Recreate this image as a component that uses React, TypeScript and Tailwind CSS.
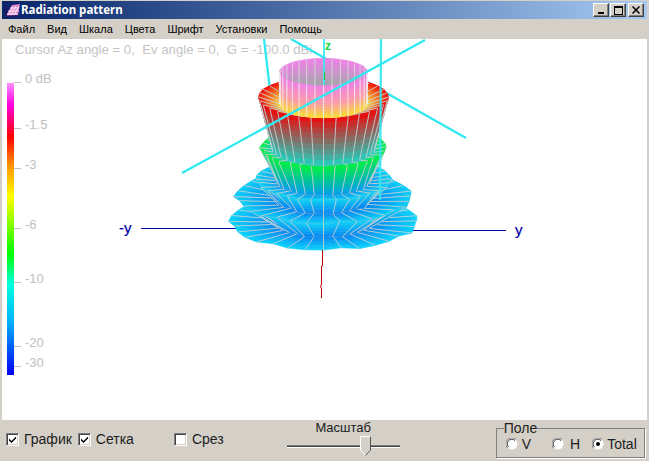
import React from "react";

type P = { r: number; cy: number; c: string; w?: number };
type Band = { a: P; b: P; side?: "back" | "front"; spoke?: string; ring?: boolean };

const CX = 323.5;
const K = 0.31;
const N = 32;
const SUB = 9;

const hex = (c: string) => [1, 3, 5].map((i) => parseInt(c.slice(i, i + 2), 16));
const mix = (a: string, b: string, t: number) => {
  const x = hex(a);
  const y = hex(b);
  return `rgb(${x.map((v, i) => Math.round(v + (y[i] - v) * t)).join(",")})`;
};

const pt = (p: P, i: number) => {
  const th = (i * 2 * Math.PI) / N;
  const wob = p.w ?? 0;
  const j = Math.sin(i * 1.7 + p.r) * 0.6 + Math.sin(i * 3.1 + p.cy) * 0.4;
  const r = p.r * (1 + wob * j);
  return [CX + r * Math.cos(th), p.cy + K * r * Math.sin(th) + wob * 20 * j];
};

const lerp = (a: number[], b: number[], t: number) => [a[0] + (b[0] - a[0]) * t, a[1] + (b[1] - a[1]) * t];

const a0: P = { r: 93, cy: 221, c: "#08d4fc", w: 0.035 };
const a1: P = { r: 48, cy: 222, c: "#0484f0", w: 0.03 };
const b1: P = { r: 87, cy: 196, c: "#0cd0f8", w: 0.04 };
const b2: P = { r: 47, cy: 199, c: "#0484f0", w: 0.05 };
const c1: P = { r: 67, cy: 179, c: "#14d4f4", w: 0.035 };
const c2: P = { r: 47, cy: 181, c: "#049cf0", w: 0.02 };
const e1: P = { r: 62, cy: 147, c: "#00f040", w: 0.035 };
const e2: P = { r: 51, cy: 149, c: "#20d0c0", w: 0.012 };
const g1: P = { r: 65, cy: 97, c: "#f00808", w: 0.006 };
const h1: P = { r: 44, cy: 104, c: "#ffd838" };
const i0: P = { r: 44, cy: 72, c: "#f080e8" };
const i1: P = { r: 44, cy: 104, c: "#90b0a0" };
const j0: P = { r: 44, cy: 104, c: "#ffe030" };
const j1: P = { r: 44, cy: 90, c: "#ffa0a8" };

const bands: Band[] = [
  { a: a0, b: a1, ring: true },
  { a: a1, b: b1, ring: true },
  { a: b1, b: b2, ring: true },
  { a: b2, b: c1, ring: true },
  { a: c1, b: c2, ring: true },
  { a: c2, b: e1 },
  { a: e1, b: e2, ring: true },
  { a: e2, b: g1 },
  { a: g1, b: h1 },
  { a: i1, b: i0, side: "back", spoke: "#d8d8d8" },
  { a: j0, b: j1, side: "front", spoke: "#f4f0f0" },
  { a: j1, b: i0, side: "front", spoke: "#f4f0f0" },
];

function half(band: Band, from: number, to: number, key: string) {
  const out: React.ReactNode[] = [];
  for (let i = from; i < to; i++) {
    for (let s = 0; s < SUB; s++) {
      const t0 = s / SUB;
      const t1 = (s + 1) / SUB;
      const p = [
        lerp(pt(band.a, i), pt(band.b, i), t0),
        lerp(pt(band.a, i + 1), pt(band.b, i + 1), t0),
        lerp(pt(band.a, i + 1), pt(band.b, i + 1), t1),
        lerp(pt(band.a, i), pt(band.b, i), t1),
      ];
      const fill = mix(band.a.c, band.b.c, (t0 + t1) / 2);
      out.push(
        <polygon
          key={`${key}-q${i}-${s}`}
          points={p.map((v) => v.join(",")).join(" ")}
          fill={fill}
          stroke={fill}
          strokeWidth={0.6}
        />
      );
    }
  }
  for (let i = from; i <= to; i++) {
    const x = pt(band.a, i);
    const y = pt(band.b, i);
    out.push(
      <line
        key={`${key}-s${i}`}
        x1={x[0]}
        y1={x[1]}
        x2={y[0]}
        y2={y[1]}
        stroke={band.spoke ?? "#c4d0d4"}
        strokeWidth={0.9}
      />
    );
  }
  return out;
}

const body: React.ReactNode[] = [];
bands.forEach((b, n) => {
  if (b.side !== "front") body.push(...half(b, N / 2, N, `b${n}`));
  if (b.side !== "back") body.push(...half(b, 0, N / 2, `f${n}`));
  if (b.ring) {
    const pts: string[] = [];
    for (let i = 0; i <= N / 2; i++) pts.push(pt(b.b, i).join(","));
    body.push(<polyline key={`r${n}`} points={pts.join(" ")} fill="none" stroke="#b4c0c8" strokeWidth={1} />);
  }
});

const ticks: [number, string][] = [
  [82, "0 dB"],
  [128, "-1.5"],
  [168, "-3"],
  [228, "-6"],
  [282, "-10"],
  [346, "-20"],
  [366, "-30"],
];

function Chart() {
  return (
    <svg width={645} height={381} viewBox="2 39 645 381" className="block" style={{ fontFamily: '"Liberation Sans", Arial, sans-serif' }}>
      <defs>
        <linearGradient id="scale" x1="0" y1="0" x2="0" y2="1">
          <stop offset="0" stopColor="#ff90ff" />
          <stop offset="0.075" stopColor="#ff00e0" />
          <stop offset="0.185" stopColor="#ff0000" />
          <stop offset="0.28" stopColor="#ff9000" />
          <stop offset="0.39" stopColor="#ffff00" />
          <stop offset="0.585" stopColor="#00ff00" />
          <stop offset="0.69" stopColor="#00ffe0" />
          <stop offset="0.82" stopColor="#00b0ff" />
          <stop offset="1" stopColor="#0000f0" />
        </linearGradient>
      </defs>
      <rect x="2" y="39" width="645" height="381" fill="#ffffff" />
      <text x="15" y="54" fontSize="13.2" fill="#c4c4c4" xmlSpace="preserve">
        Cursor Az angle = 0,  Ev angle = 0,  G = -100.0 dBi
      </text>
      <rect x="7" y="83" width="7" height="292" fill="url(#scale)" />
      {ticks.map(([y, label]) => (
        <g key={label}>
          <rect x="14" y={y} width="7" height="1" fill="#c0c0c0" />
          <text x="25" y={y + 1} fontSize="13" fill="#c0c0c0">
            {label}
          </text>
        </g>
      ))}
      <line x1="141" y1="228.5" x2="236" y2="228.5" stroke="#0000a8" strokeWidth="1" />
      <line x1="410" y1="230.5" x2="506" y2="230.5" stroke="#0000a8" strokeWidth="1" />
      <text x="119" y="233" fontSize="15" fill="#0000a8" stroke="#0000a8" strokeWidth="0.2">
        -y
      </text>
      <text x="515" y="235" fontSize="15" fill="#0000a8" stroke="#0000a8" strokeWidth="0.2">
        y
      </text>
      <polyline points="322.5,250 322.5,266 321.5,266 321.5,284 320.5,287 321.5,288 321.5,298" fill="none" stroke="#c00000" strokeWidth="1" />
      <line x1="291" y1="39" x2="466" y2="138" stroke="#30e8f0" strokeWidth="2.3" />
      <line x1="264" y1="39" x2="270" y2="90" stroke="#30e8f0" strokeWidth="2.3" />
      {body}
      <line x1="381" y1="39" x2="380" y2="200" stroke="#30e8f0" strokeWidth="2.3" opacity="0.9" />
      <line x1="182" y1="173" x2="425" y2="40" stroke="#30e8f0" strokeWidth="2.3" />
      <line x1="324" y1="39" x2="324" y2="85" stroke="#30e8f0" strokeWidth="2" opacity="0.85" />
      <line x1="324.5" y1="72" x2="324.5" y2="80" stroke="#20c040" strokeWidth="1" />
      <text x="325" y="50" fontSize="12" fontWeight="bold" fill="#20d830">
        z
      </text>
    </svg>
  );
}

function Check({ on }: { on: boolean }) {
  return (
    <span className="flex h-[13px] w-[13px] shrink-0 items-center justify-center border border-t-[#808080] border-l-[#808080] border-r-white border-b-white bg-white shadow-[inset_1px_1px_0_#404040,inset_-1px_-1px_0_#d4d0c8]">
      {on && (
        <svg width="9" height="9" viewBox="0 0 9 9">
          <path d="M1 3.5 L3.5 6 L8 1.5 V3.5 L3.5 8 L1 5.5 Z" fill="#000" />
        </svg>
      )}
    </span>
  );
}

function Radio({ on }: { on: boolean }) {
  return (
    <svg width="12" height="12" viewBox="0 0 12 12" className="shrink-0">
      <circle cx="6" cy="6" r="5.5" fill="#ffffff" />
      <path d="M1.5 10 A5.5 5.5 0 0 1 10 1.5" fill="none" stroke="#808080" strokeWidth="1" />
      <path d="M2.6 9 A4.5 4.5 0 0 1 9 2.6" fill="none" stroke="#404040" strokeWidth="1" />
      {on && <circle cx="6" cy="6" r="2" fill="#000" />}
    </svg>
  );
}

function Btn({ children }: { children: React.ReactNode }) {
  return (
    <span className="flex h-[14px] w-[16px] items-center justify-center border border-t-white border-l-white border-r-[#404040] border-b-[#404040] bg-[#d4d0c8] shadow-[inset_-1px_-1px_0_#808080]">
      {children}
    </span>
  );
}

const menu = ["Файл", "Вид", "Шкала", "Цвета", "Шрифт", "Установки", "Помощь"];

export default function App() {
  return (
    <div
      className="flex h-[461px] w-[649px] flex-col overflow-hidden bg-[#d4d0c8] text-black"
      style={{ fontFamily: '"Liberation Sans", Arial, sans-serif' }}
    >
      <div className="mx-[2px] mt-[1px] flex h-[18px] items-center bg-gradient-to-r from-[#0a246a] to-[#a6caf0] pr-[3px]">
        <svg width="16" height="16" viewBox="0 0 16 16" className="ml-[3px] shrink-0">
          <path d="M1 14 L7 3 L15 2 L13 13 Z" fill="#e080d0" />
          <path d="M3 13 L8 5 M6 13 L11 4 M9 13 L14 4 M3 9 H14 M5 6 H14 M2 12 H13" stroke="#ffffff" strokeWidth="0.8" />
          <path d="M1 3 V14 H13" stroke="#301060" strokeWidth="1" fill="none" />
        </svg>
        <span className="text-[11.5px] leading-none font-bold text-white" style={{ fontFamily: '"Noto Sans", sans-serif' }}>
          Radiation pattern
        </span>
        <div className="ml-auto flex items-center gap-[1px]">
          <Btn>
            <span className="mt-[6px] h-[2px] w-[6px] bg-black" />
          </Btn>
          <Btn>
            <span className="h-[9px] w-[9px] border border-t-2 border-black" />
          </Btn>
          <span className="ml-[1px]">
            <Btn>
              <svg width="8" height="8" viewBox="0 0 8 8">
                <path d="M0.5 0.5 L7.5 7.5 M7.5 0.5 L0.5 7.5" stroke="#000" strokeWidth="1.5" />
              </svg>
            </Btn>
          </span>
        </div>
      </div>
      <div className="flex h-[20px] items-center gap-[12px] pl-[8px] text-[11px]">
        {menu.map((m) => (
          <span key={m}>{m}</span>
        ))}
      </div>
      <div className="mx-[2px] h-[381px] w-[645px]">
        <Chart />
      </div>
      <div className="flex flex-1 items-start pl-[6px] text-[14px] text-[#202020]">
        <div className="mt-[13px] flex items-center">
          <Check on />
          <span className="ml-[5px] leading-[13px]">График</span>
          <span className="ml-[6px]">
            <Check on />
          </span>
          <span className="ml-[5px] leading-[13px]">Сетка</span>
          <span className="ml-[40px]">
            <Check on={false} />
          </span>
          <span className="ml-[5px] leading-[13px]">Срез</span>
        </div>
        <div className="ml-[63px] flex w-[113px] flex-col items-center">
          <span className="mt-[1px] text-[13px] leading-[14px]">Масштаб</span>
          <div className="relative mt-[10px] h-[3px] w-full border-t border-t-[#808080] border-b border-b-white bg-[#404040]">
            <svg width="11" height="20" viewBox="0 0 11 20" className="absolute top-[-10px] left-[73px]">
              <path d="M0.5 0.5 H10.5 V14 L5.5 19.5 L0.5 14 Z" fill="#d4d0c8" stroke="#ffffff" strokeWidth="1" />
              <path d="M10.5 0.5 V14 L5.5 19.5" fill="none" stroke="#505050" strokeWidth="1" />
            </svg>
          </div>
        </div>
        <fieldset className="mt-[3px] ml-[96px] h-[35px] w-[149px] border border-[#808080] pl-[9px] shadow-[1px_1px_0_#ffffff]">
          <legend className="ml-[-2px] text-[14px] leading-[10px]">Поле</legend>
          <div className="mt-[4px] flex items-center text-[14px] leading-[14px]">
            <Radio on={false} />
            <span className="ml-[4px]">V</span>
            <span className="ml-[21px]">
              <Radio on={false} />
            </span>
            <span className="ml-[6px]">H</span>
            <span className="ml-[12px]">
              <Radio on />
            </span>
            <span className="ml-[3px]">Total</span>
          </div>
        </fieldset>
      </div>
    </div>
  );
}
